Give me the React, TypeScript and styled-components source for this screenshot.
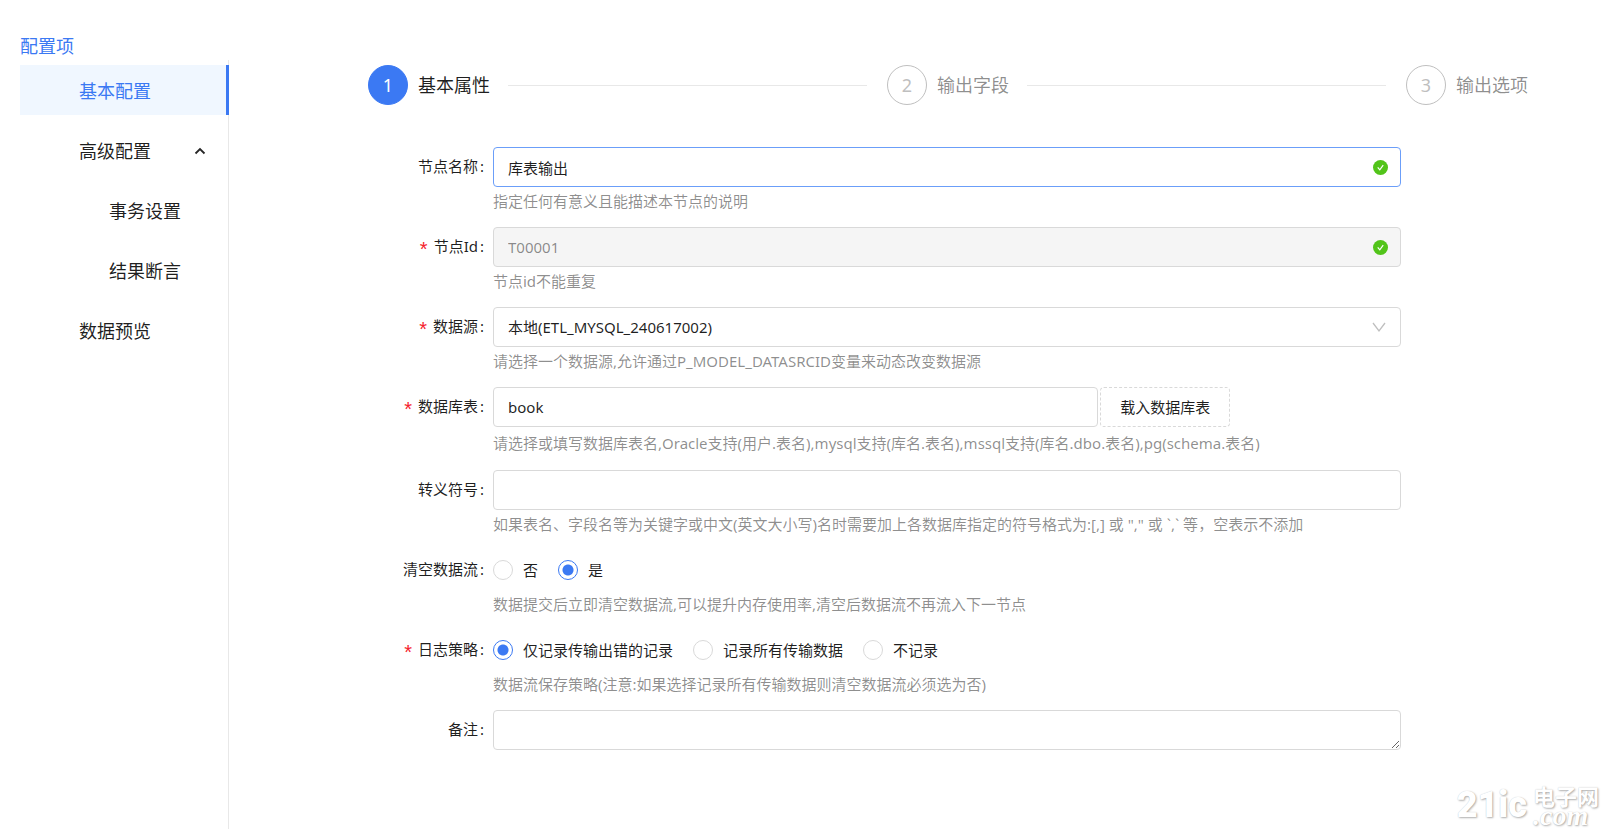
import React, { useState } from "react";
import styled, { createGlobalStyle } from "styled-components";

const BLUE = "#3b79f3";
const TEXT = "rgba(0, 0, 0, 0.88)";
const MUTED = "rgba(0, 0, 0, 0.45)";
const BORDER = "#d9d9d9";

const GlobalStyle = createGlobalStyle`
  *, *::before, *::after { box-sizing: border-box; }
  body {
    margin: 0;
    background: #fff;
    color: ${TEXT};
    font-family: "Noto Sans", "Noto Sans CJK SC", sans-serif;
    font-size: 15px;
    line-height: 24px;
  }
  button, input, select, textarea { font: inherit; color: inherit; }
`;

const Page = styled.div`
  position: relative;
  display: flex;
  min-height: 100vh;
`;

const Sidebar = styled.aside`
  display: flex;
  flex-direction: column;
  flex: none;
  width: 229px;
  padding: 32px 0 0 20px;
`;

const SidebarTitle = styled.h2`
  margin: 0;
  color: ${BLUE};
  font-size: 18px;
  font-weight: inherit;
  line-height: 28px;
`;

const Menu = styled.nav`
  display: flex;
  flex: 1;
  flex-direction: column;
  gap: 10px;
  padding-top: 5px;
  border-right: 1px solid #e8e8e8;
`;

const MenuItem = styled.button<{ $active?: boolean; $nested?: boolean }>`
  display: flex;
  align-items: center;
  justify-content: space-between;
  height: 50px;
  margin-right: -1px;
  padding: 1px 20px 0 ${(p) => (p.$nested ? 89 : 59)}px;
  border: 0;
  border-right: 3px solid ${(p) => (p.$active ? BLUE : "transparent")};
  background: ${(p) => (p.$active ? "#f0f7ff" : "transparent")};
  color: ${(p) => (p.$active ? BLUE : TEXT)};
  font-size: 18px;
  text-align: left;
  cursor: pointer;
`;

const Main = styled.main`
  flex: 1;
  min-width: 0;
  padding: 65px 0 40px;
`;

const Steps = styled.ol`
  display: flex;
  gap: 20px;
  margin: 0 81px 42px 139px;
  padding: 0;
  list-style: none;
`;

const Step = styled.li<{ $last: boolean }>`
  display: flex;
  align-items: center;
  flex: ${(p) => (p.$last ? "none" : "1")};
`;

const StepNumber = styled.span<{ $active: boolean }>`
  display: flex;
  align-items: center;
  justify-content: center;
  width: 40px;
  height: 40px;
  margin-right: 10px;
  border: 1px solid ${(p) => (p.$active ? BLUE : "#bfbfbf")};
  border-radius: 50%;
  background: ${(p) => (p.$active ? BLUE : "#fff")};
  color: ${(p) => (p.$active ? "#fff" : "#bfbfbf")};
  font-size: 18px;
`;

const StepTitle = styled.span<{ $active: boolean }>`
  color: ${(p) => (p.$active ? TEXT : MUTED)};
  font-size: 18px;
`;

const StepLine = styled.span`
  flex: 1;
  height: 1px;
  margin-left: 18px;
  background: #e8e8e8;
`;

const Form = styled.form`
  display: flex;
  flex-direction: column;
  gap: 16px;
  padding-right: 208px;
`;

const Row = styled.div`
  display: flex;
`;

const LabelCell = styled.div`
  display: flex;
  align-items: center;
  justify-content: flex-end;
  flex: none;
  width: 264px;
  height: 38px;
  padding-right: 9px;
`;

const Required = styled.span`
  height: 18px;
  margin-right: 6px;
  color: #f5222d;
  font-family: "Liberation Sans", sans-serif;
  font-size: 20px;
`;

const Colon = styled.span`
  margin-left: 2px;
`;

const Field = styled.div`
  flex: 1;
  min-width: 0;
`;

const Control = styled.div`
  position: relative;
  display: flex;
  gap: 2px;
`;

const TextInput = styled.input<{ $focused?: boolean; $narrow?: boolean }>`
  width: ${(p) => (p.$narrow ? "66.66%" : "100%")};
  height: 40px;
  padding: 0 14px;
  border: 1px solid ${(p) => (p.$focused ? "#6b9ef9" : BORDER)};
  border-radius: 4px;
  background: #fff;
  outline: none;
  &:disabled {
    background: #f5f5f5;
    color: ${MUTED};
  }
`;

const Select = styled.select`
  appearance: none;
  width: 100%;
  height: 40px;
  padding: 0 36px 0 14px;
  border: 1px solid ${BORDER};
  border-radius: 4px;
  background: #fff;
  outline: none;
`;

const TextArea = styled.textarea`
  display: block;
  width: 100%;
  height: 40px;
  padding: 7px 14px;
  border: 1px solid ${BORDER};
  border-radius: 4px;
  outline: none;
  resize: vertical;
`;

const FieldIcon = styled.svg`
  position: absolute;
  top: 13px;
  right: 13px;
  pointer-events: none;
`;

const DashedButton = styled.button`
  height: 40px;
  padding: 0 19px;
  border: 1px dashed ${BORDER};
  border-radius: 4px;
  background: #fff;
  white-space: nowrap;
  cursor: pointer;
`;

const Hint = styled.p<{ $spaced?: boolean }>`
  margin: ${(p) => (p.$spaced ? "4px 0 -1px" : "2px 0 -2px")};
  color: ${MUTED};
`;

const RadioGroup = styled.div`
  display: flex;
  align-items: center;
  gap: 20px;
  height: 40px;
`;

const RadioLabel = styled.label`
  display: flex;
  align-items: center;
  gap: 10px;
  cursor: pointer;
`;

const Radio = styled.input`
  appearance: none;
  width: 20px;
  height: 20px;
  margin: 0;
  border: 1px solid ${BORDER};
  border-radius: 50%;
  background: #fff;
  &:checked {
    border-color: ${BLUE};
    background: radial-gradient(circle, ${BLUE} 5px, #fff 6px);
  }
`;

const Watermark = styled.div`
  position: absolute;
  right: 10px;
  bottom: 4px;
  display: flex;
  align-items: center;
  gap: 6px;
  color: #fff;
  font-weight: 700;
  text-shadow: 1px 1px 2px rgba(0, 0, 0, 0.3), 0 0 1px rgba(0, 0, 0, 0.2);
  pointer-events: none;
`;

const WatermarkName = styled.span`
  font-family: Roboto, "Liberation Sans", sans-serif;
  font-size: 36px;
  font-weight: 900;
  line-height: 40px;
`;

const WatermarkSite = styled.span`
  display: flex;
  flex-direction: column;
  font-size: 22px;
  line-height: 22px;
`;

const WatermarkDomain = styled.span`
  font-family: "Liberation Serif", serif;
  font-size: 28px;
  font-style: italic;
  line-height: 18px;
`;

function ValidIcon() {
  return (
    <FieldIcon width="15" height="15" viewBox="0 0 15 15" aria-hidden="true">
      <circle cx="7.5" cy="7.5" r="7.5" fill="#52c41a" />
      <path d="M4.7 7.4 6.8 9.8 10.2 5.2" fill="none" stroke="#fff" strokeWidth="1.2" />
    </FieldIcon>
  );
}

function FormRow(props: {
  label: string;
  id: string;
  required?: boolean;
  hint?: string;
  spaced?: boolean;
  group?: boolean;
  children: React.ReactNode;
}) {
  const { label, id, required, hint, spaced, group, children } = props;
  return (
    <Row>
      <LabelCell>
        {required && <Required>*</Required>}
        {group ? <span id={id}>{label}</span> : <label htmlFor={id}>{label}</label>}
        <Colon>:</Colon>
      </LabelCell>
      <Field>
        {children}
        {hint && <Hint $spaced={spaced}>{hint}</Hint>}
      </Field>
    </Row>
  );
}

function RadioField(props: { id: string; options: string[]; initial: string }) {
  const [value, setValue] = useState(props.initial);
  return (
    <RadioGroup role="radiogroup" aria-labelledby={props.id}>
      {props.options.map((option) => (
        <RadioLabel key={option}>
          <Radio
            type="radio"
            name={props.id}
            checked={value === option}
            onChange={() => setValue(option)}
          />
          {option}
        </RadioLabel>
      ))}
    </RadioGroup>
  );
}

const STEPS = ["基本属性", "输出字段", "输出选项"];

export default function App() {
  return (
    <Page>
      <GlobalStyle />
      <Sidebar>
        <SidebarTitle>配置项</SidebarTitle>
        <Menu>
          <MenuItem $active>基本配置</MenuItem>
          <MenuItem aria-expanded="true">
            高级配置
            <svg width="12" height="12" viewBox="0 0 12 12" aria-hidden="true">
              <path d="M1.5 8.5 6 4l4.500 4.500" fill="none" stroke="#262626" strokeWidth="1.8" />
            </svg>
          </MenuItem>
          <MenuItem $nested>事务设置</MenuItem>
          <MenuItem $nested>结果断言</MenuItem>
          <MenuItem>数据预览</MenuItem>
        </Menu>
      </Sidebar>
      <Main>
        <Steps>
          {STEPS.map((title, index) => (
            <Step key={title} $last={index === STEPS.length - 1}>
              <StepNumber $active={index === 0}>{index + 1}</StepNumber>
              <StepTitle $active={index === 0}>{title}</StepTitle>
              {index < STEPS.length - 1 && <StepLine />}
            </Step>
          ))}
        </Steps>
        <Form onSubmit={(event) => event.preventDefault()}>
          <FormRow id="name" label="节点名称" hint="指定任何有意义且能描述本节点的说明">
            <Control>
              <TextInput id="name" $focused defaultValue="库表输出" />
              <ValidIcon />
            </Control>
          </FormRow>
          <FormRow id="node-id" label="节点Id" required hint="节点id不能重复">
            <Control>
              <TextInput id="node-id" disabled defaultValue="T00001" />
              <ValidIcon />
            </Control>
          </FormRow>
          <FormRow
            id="source"
            label="数据源"
            required
            hint="请选择一个数据源,允许通过P_MODEL_DATASRCID变量来动态改变数据源"
          >
            <Control>
              <Select id="source">
                <option>本地(ETL_MYSQL_240617002)</option>
              </Select>
              <FieldIcon width="18" height="14" viewBox="0 0 18 14" aria-hidden="true">
                <path d="M3 3 9 11 15 3" fill="none" stroke="#bfbfbf" strokeWidth="1.3" />
              </FieldIcon>
            </Control>
          </FormRow>
          <FormRow
            id="table"
            label="数据库表"
            required
            spaced
            hint="请选择或填写数据库表名,Oracle支持(用户.表名),mysql支持(库名.表名),mssql支持(库名.dbo.表名),pg(schema.表名)"
          >
            <Control>
              <TextInput id="table" $narrow defaultValue="book" />
              <DashedButton type="button">载入数据库表</DashedButton>
            </Control>
          </FormRow>
          <FormRow
            id="escape"
            label="转义符号"
            hint={'如果表名、字段名等为关键字或中文(英文大小写)名时需要加上各数据库指定的符号格式为:[,] 或 "," 或 `,` 等，空表示不添加'}
          >
            <Control>
              <TextInput id="escape" />
            </Control>
          </FormRow>
          <FormRow
            id="clear"
            label="清空数据流"
            group
            hint="数据提交后立即清空数据流,可以提升内存使用率,清空后数据流不再流入下一节点"
          >
            <RadioField id="clear" options={["否", "是"]} initial="是" />
          </FormRow>
          <FormRow
            id="log"
            label="日志策略"
            required
            group
            hint="数据流保存策略(注意:如果选择记录所有传输数据则清空数据流必须选为否)"
          >
            <RadioField
              id="log"
              options={["仅记录传输出错的记录", "记录所有传输数据", "不记录"]}
              initial="仅记录传输出错的记录"
            />
          </FormRow>
          <FormRow id="remark" label="备注">
            <TextArea id="remark" rows={1} />
          </FormRow>
        </Form>
      </Main>
      <Watermark>
        <WatermarkName>21ic</WatermarkName>
        <WatermarkSite>
          <span>电子网</span>
          <WatermarkDomain>.com</WatermarkDomain>
        </WatermarkSite>
      </Watermark>
    </Page>
  );
}
